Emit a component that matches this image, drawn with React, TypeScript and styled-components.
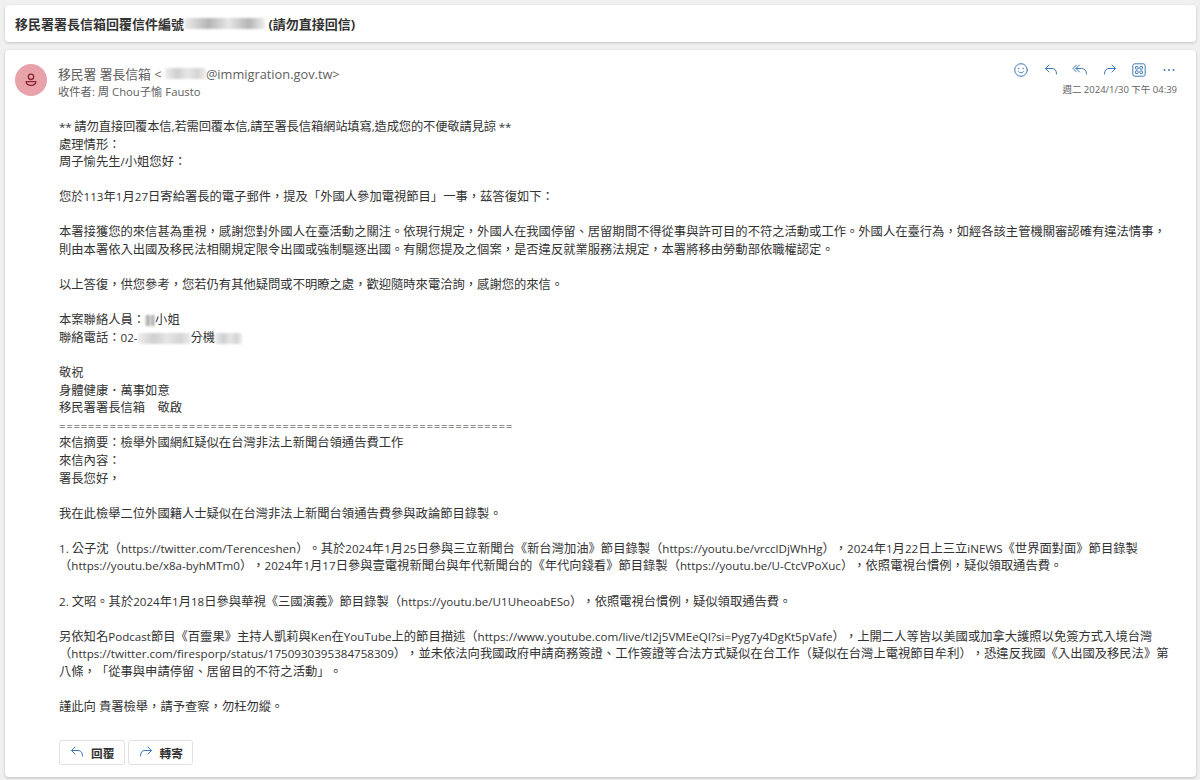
import React from "react";
import styled, { createGlobalStyle } from "styled-components";

const GlobalStyle = createGlobalStyle`
html, body {
  margin: 0;
  padding: 0;
  background: #f0f0f0;
}
`;

const FONT = `"Open Sans", "Noto Sans CJK TC", sans-serif`;

const Page = styled.div`
  width: 1200px;
  height: 780px;
  box-sizing: border-box;
  padding: 5px 4px 3px 5px;
  display: flex;
  flex-direction: column;
  gap: 8px;
  overflow: hidden;
  font-family: ${FONT};
  text-spacing-trim: space-all;
`;

const SubjectBar = styled.div`
  height: 37px;
  flex: none;
  display: flex;
  align-items: center;
  padding: 0 10px;
  background: #fff;
  border-radius: 4px;
  box-shadow: 0 1px 3px rgba(0, 0, 0, 0.2);
  font-size: 13px;
  font-weight: 700;
  color: #333;
`;

const MailCard = styled.div`
  flex: 1;
  display: flex;
  flex-direction: column;
  padding: 14px 10px 0;
  background: #fff;
  border-radius: 4px;
  box-shadow: 0 1px 3px rgba(0, 0, 0, 0.22);
`;

const MailHeader = styled.div`
  display: flex;
  align-items: flex-start;
  height: 54px;
  flex: none;
`;

const Avatar = styled.div`
  width: 32px;
  height: 32px;
  flex: none;
  display: flex;
  align-items: center;
  justify-content: center;
  border-radius: 50%;
  background: #e8a2aa;
  margin-right: 11px;
`;

const Sender = styled.div`
  flex: 1;
  display: flex;
  flex-direction: column;
`;

const FromLine = styled.div`
  display: flex;
  align-items: center;
  height: 19px;
  font-size: 12.8px;
  color: #616161;
`;

const ToLine = styled.div`
  height: 17px;
  line-height: 17px;
  font-size: 11.3px;
  color: #616161;
`;

const HeaderRight = styled.div`
  display: flex;
  flex-direction: column;
  align-items: flex-end;
  gap: 5px;
  margin-top: -2px;
  padding-right: 9px;
`;

const Actions = styled.div`
  display: flex;
  align-items: center;
  gap: 13.6px;
  height: 16px;
  color: #3f7ab5;
`;

const Stamp = styled.div`
  font-size: 9.5px;
  line-height: 14px;
  color: #616161;
`;

const Body = styled.div`
  margin-left: 44px;
  font-size: 12.3px;
  color: #333;
`;

const Line = styled.div<{ $tight?: boolean }>`
  height: 17.58px;
  line-height: 17.58px;
  white-space: pre;
  letter-spacing: ${(p) => (p.$tight ? "-0.15px" : "normal")};
`;

const Latin = styled.span`
  font-size: 11.6px;
`;

const Rule = styled(Line)`
  font-size: 11.5px;
  letter-spacing: 0.63px;
`;

const Redact = styled.span<{ $w: number; $shade?: string }>`
  display: inline-block;
  vertical-align: -2px;
  width: ${(p) => p.$w}px;
  height: 11px;
  background: linear-gradient(
    90deg,
    #eee 0%,
    ${(p) => p.$shade || "#cfcfcf"} 30%,
    #e6e6e6 55%,
    ${(p) => p.$shade || "#d4d4d4"} 80%,
    #eeeeee 100%
  );
  filter: blur(0.8px);
`;

const Buttons = styled.div`
  display: flex;
  gap: 3px;
  margin: 24px 0 0 44px;
`;

const ActionButton = styled.div`
  width: 65.5px;
  height: 25px;
  box-sizing: border-box;
  display: flex;
  align-items: center;
  justify-content: center;
  gap: 6px;
  border: 1px solid #e1e1e1;
  border-radius: 3px;
  font-size: 11.7px;
  font-weight: 700;
  color: #333;
  svg {
    color: #3f7ab5;
  }
`;

// latin runs sit a little smaller than the CJK around them
const mix = (text: string) =>
  text.split(/([\x20-\x7e]+)/).map((part, i) => (i % 2 ? <Latin key={i}>{part}</Latin> : part));

const ReplyIcon = ({ size = 16 }: { size?: number }) => (
  <svg width={size} height={size} viewBox="0 0 16 16" fill="none" stroke="currentColor" strokeWidth="1" strokeLinecap="round" strokeLinejoin="round">
    <path d="M6 3 L2.5 6.5 L6 10" />
    <path d="M2.5 6.5 H9 C12 6.5 13.5 8.5 13.5 12" />
  </svg>
);

const ReplyAllIcon = () => (
  <svg width="16" height="16" viewBox="0 0 16 16" fill="none" stroke="currentColor" strokeWidth="1" strokeLinecap="round" strokeLinejoin="round">
    <path d="M4.5 3 L1 6.5 L4.5 10" />
    <path d="M7.5 3 L4 6.5 L7.5 10" />
    <path d="M4 6.5 H9.5 C12.5 6.5 14.5 8.5 14.5 12" />
  </svg>
);

const ForwardIcon = ({ size = 16 }: { size?: number }) => (
  <svg width={size} height={size} viewBox="0 0 16 16" fill="none" stroke="currentColor" strokeWidth="1" strokeLinecap="round" strokeLinejoin="round">
    <path d="M10 3 L13.5 6.5 L10 10" />
    <path d="M13.5 6.5 H7 C4 6.5 2.5 8.5 2.5 12" />
  </svg>
);

const SmileIcon = () => (
  <svg width="16" height="16" viewBox="0 0 16 16" fill="none" stroke="currentColor" strokeWidth="1" strokeLinecap="round">
    <circle cx="8" cy="8" r="6.3" />
    <circle cx="5.8" cy="6.5" r="0.7" fill="currentColor" stroke="none" />
    <circle cx="10.2" cy="6.5" r="0.7" fill="currentColor" stroke="none" />
    <path d="M5.3 9.6 C6.5 11.3 9.5 11.3 10.7 9.6" />
  </svg>
);

const AppsIcon = () => (
  <svg width="16" height="16" viewBox="0 0 16 16" fill="none" stroke="currentColor" strokeWidth="1">
    <rect x="1.8" y="1.8" width="12.4" height="12.4" rx="2" />
    <rect x="4.5" y="4.5" width="2.6" height="2.6" rx="0.5" />
    <rect x="8.9" y="4.5" width="2.6" height="2.6" rx="0.5" />
    <rect x="4.5" y="8.9" width="2.6" height="2.6" rx="0.5" />
    <rect x="8.9" y="8.9" width="2.6" height="2.6" rx="0.5" />
  </svg>
);

const MoreIcon = () => (
  <svg width="16" height="16" viewBox="0 0 16 16" fill="currentColor">
    <circle cx="3.5" cy="8" r="1" />
    <circle cx="8" cy="8" r="1" />
    <circle cx="12.5" cy="8" r="1" />
  </svg>
);

const PersonIcon = () => (
  <svg width="16" height="16" viewBox="0 0 16 16" fill="none" stroke="#8a2530" strokeWidth="1.3">
    <circle cx="8" cy="4.8" r="2.7" />
    <path d="M3.2 9.6 H12.8 C12.8 12.2 10.8 13.4 8 13.4 C5.2 13.4 3.2 12.2 3.2 9.6 Z" />
  </svg>
);

const App = () => {
  return (
    <Page>
      <GlobalStyle />
      <SubjectBar>
        移民署署長信箱回覆信件編號
        <Redact $w={81} $shade="#b5b5b5" />
        &nbsp;(請勿直接回信)
      </SubjectBar>
      <MailCard>
        <MailHeader>
          <Avatar>
            <PersonIcon />
          </Avatar>
          <Sender>
            <FromLine>
              移民署 署長信箱 &lt;&nbsp;<Redact $w={41} />@immigration.gov.tw&gt;
            </FromLine>
            <ToLine>收件者: 周 Chou子愉 Fausto</ToLine>
          </Sender>
          <HeaderRight>
            <Actions>
              <SmileIcon />
              <ReplyIcon />
              <ReplyAllIcon />
              <ForwardIcon />
              <AppsIcon />
              <MoreIcon />
            </Actions>
            <Stamp>週二 2024/1/30 下午 04:39</Stamp>
          </HeaderRight>
        </MailHeader>
        <Body>
          <Line $tight>{mix("** 請勿直接回覆本信,若需回覆本信,請至署長信箱網站填寫,造成您的不便敬請見諒 **")}</Line>
          <Line>處理情形：</Line>
          <Line>{mix("周子愉先生/小姐您好：")}</Line>
          <Line> </Line>
          <Line>{mix("您於113年1月27日寄給署長的電子郵件，提及「外國人參加電視節目」一事，茲答復如下：")}</Line>
          <Line> </Line>
          <Line>本署接獲您的來信甚為重視，感謝您對外國人在臺活動之關注。依現行規定，外國人在我國停留、居留期間不得從事與許可目的不符之活動或工作。外國人在臺行為，如經各該主管機關審認確有違法情事，</Line>
          <Line>則由本署依入出國及移民法相關規定限令出國或強制驅逐出國。有關您提及之個案，是否違反就業服務法規定，本署將移由勞動部依職權認定。</Line>
          <Line> </Line>
          <Line>以上答復，供您參考，您若仍有其他疑問或不明瞭之處，歡迎隨時來電洽詢，感謝您的來信。</Line>
          <Line> </Line>
          <Line>本案聯絡人員：<Redact $w={10} $shade="#999" />小姐</Line>
          <Line>聯絡電話：<Latin>02-</Latin><Redact $w={53} />分機<Redact $w={27} /></Line>
          <Line> </Line>
          <Line>敬祝</Line>
          <Line>身體健康．萬事如意</Line>
          <Line>移民署署長信箱　敬啟</Line>
          <Rule>{"=".repeat(63)}</Rule>
          <Line>來信摘要：檢舉外國網紅疑似在台灣非法上新聞台領通告費工作</Line>
          <Line>來信內容：</Line>
          <Line>署長您好，</Line>
          <Line> </Line>
          <Line>我在此檢舉二位外國籍人士疑似在台灣非法上新聞台領通告費參與政論節目錄製。</Line>
          <Line> </Line>
          <Line>{mix("1. 公子沈（https://twitter.com/Terenceshen）。其於2024年1月25日參與三立新聞台《新台灣加油》節目錄製（https://youtu.be/vrcclDjWhHg），2024年1月22日上三立iNEWS《世界面對面》節目錄製")}</Line>
          <Line>{mix("（https://youtu.be/x8a-byhMTm0），2024年1月17日參與壹電視新聞台與年代新聞台的《年代向錢看》節目錄製（https://youtu.be/U-CtcVPoXuc），依照電視台慣例，疑似領取通告費。")}</Line>
          <Line> </Line>
          <Line>{mix("2. 文昭。其於2024年1月18日參與華視《三國演義》節目錄製（https://youtu.be/U1UheoabESo），依照電視台慣例，疑似領取通告費。")}</Line>
          <Line> </Line>
          <Line>{mix("另依知名Podcast節目《百靈果》主持人凱莉與Ken在YouTube上的節目描述（https://www.youtube.com/live/tI2j5VMEeQI?si=Pyg7y4DgKt5pVafe），上開二人等皆以美國或加拿大護照以免簽方式入境台灣")}</Line>
          <Line>{mix("（https://twitter.com/firesporp/status/1750930395384758309），並未依法向我國政府申請商務簽證、工作簽證等合法方式疑似在台工作（疑似在台灣上電視節目牟利），恐違反我國《入出國及移民法》第")}</Line>
          <Line>八條，「從事與申請停留、居留目的不符之活動」。</Line>
          <Line> </Line>
          <Line>{mix("謹此向 貴署檢舉，請予查察，勿枉勿縱。")}</Line>
        </Body>
        <Buttons>
          <ActionButton>
            <ReplyIcon />
            回覆
          </ActionButton>
          <ActionButton>
            <ForwardIcon />
            轉寄
          </ActionButton>
        </Buttons>
      </MailCard>
    </Page>
  );
};

export default App;
